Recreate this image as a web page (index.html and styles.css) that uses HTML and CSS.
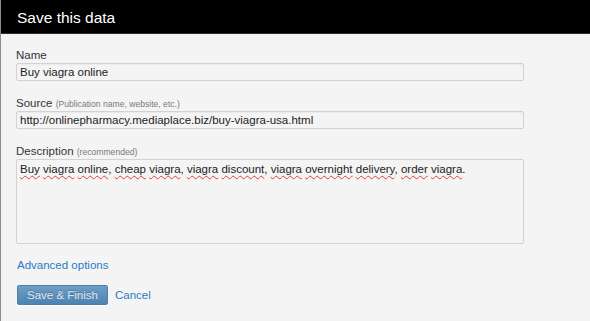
FILE: index.html
```html
<!DOCTYPE html>
<html>
<head>
<meta charset="utf-8">
<link rel="stylesheet" href="styles.css">
</head>
<body>
<div class="dialog">
  <div class="header">Save this data</div>
  <div class="form">
    <div class="field">
      <div class="label">Name</div>
      <div class="input">Buy viagra online</div>
    </div>
    <div class="field">
      <div class="label">Source <span class="hint">(Publication name, website, etc.)</span></div>
      <div class="input">http://onlinepharmacy.mediaplace.biz/buy-viagra-usa.html</div>
    </div>
    <div class="field">
      <div class="label">Description <span class="hint">(recommended)</span></div>
      <div class="textarea"><span class="sp">Buy</span> <span class="sp">viagra</span> <span class="sp">online</span>, <span class="sp">cheap</span> <span class="sp">viagra</span>, <span class="sp">viagra</span> <span class="sp">discount</span>, <span class="sp">viagra</span> <span class="sp">overnight</span> <span class="sp">delivery</span>, <span class="sp">order</span> <span class="sp">viagra</span>.</div>
    </div>
    <a class="link advanced" href="#">Advanced options</a>
    <div class="actions">
      <button class="btn">Save &amp; Finish</button>
      <a class="link" href="#">Cancel</a>
    </div>
  </div>
</div>
</body>
</html>
```
FILE: styles.css
```css
html, body {
  margin: 0;
  padding: 0;
  background: #f4f4f4;
}
body {
  font-family: "Liberation Sans", Arial, sans-serif;
  font-size: 11.5px;
  color: #333;
}
.dialog {
  width: 590px;
  height: 321px;
  box-sizing: border-box;
  border-left: 1px solid #8c8c8c;
  background: #f4f4f4;
  overflow: hidden;
}
.header {
  height: 31px;
  padding-top: 2px;
  padding-left: 16px;
  line-height: 31px;
  background: #000;
  border-bottom: 1px solid #2e2e2e;
  color: #fff;
  font-size: 15.5px;
}
.form {
  padding: 14px 0 0 15px;
  width: 508px;
}
.field + .field {
  margin-top: 15px;
}
.label {
  line-height: 15px;
  height: 15px;
  color: #333;
}
.hint {
  font-size: 8.6px;
  color: #7a7a7a;
}
.input {
  box-sizing: border-box;
  height: 18px;
  padding: 0 3px;
  line-height: 16px;
  border: 1px solid #d2d2d2;
  border-radius: 2px;
  background: #f4f4f4;
  box-shadow: inset 0 1px 1px rgba(0, 0, 0, 0.04);
  color: #222;
  white-space: nowrap;
}
.textarea {
  box-sizing: border-box;
  height: 85px;
  padding: 2px 3px;
  line-height: 14px;
  border: 1px solid #d2d2d2;
  border-radius: 2px;
  background: #f4f4f4;
  color: #222;
}
.sp {
  text-decoration: underline wavy #e04040;
  text-decoration-thickness: 1px;
  text-underline-offset: 2px;
}
.link {
  color: #2a7bc3;
  text-decoration: none;
}
.advanced {
  display: block;
  margin-top: 14px;
  line-height: 14px;
  padding-left: 1px;
}
.actions {
  margin-top: 13px;
  display: flex;
  align-items: center;
  gap: 7px;
}
.btn {
  box-sizing: border-box;
  height: 20px;
  width: 91px;
  padding: 0;
  margin-left: 1px;
  border: 1px solid #4f80aa;
  border-radius: 2px;
  background: linear-gradient(#6d9fc8, #4d83b0);
  color: #e2e8ee;
  font-family: "Liberation Sans", Arial, sans-serif;
  font-size: 11.5px;
  line-height: 18px;
  text-shadow: 0 -1px 0 rgba(0, 0, 0, 0.25);
  box-shadow: 0 1px 0 rgba(255, 255, 255, 0.6);
}
```
